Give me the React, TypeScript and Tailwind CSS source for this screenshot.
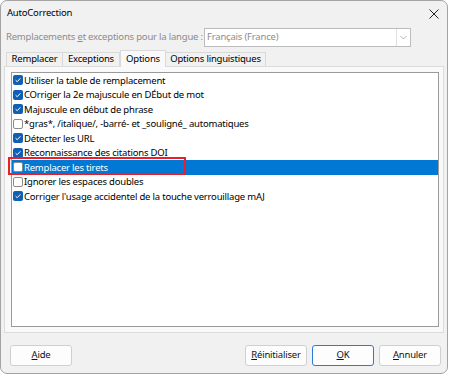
import React from 'react';

const items: { label: string; checked: boolean }[] = [
    { label: 'Utiliser la table de remplacement', checked: true },
    { label: 'COrriger la 2e majuscule en DÉbut de mot', checked: true },
    { label: 'Majuscule en début de phrase', checked: true },
    { label: '*gras*, /italique/, -barré- et _souligné_ automatiques', checked: false },
    { label: 'Détecter les URL', checked: true },
    { label: 'Reconnaissance des citations DOI', checked: true },
    { label: 'Remplacer les tirets', checked: false },
    { label: 'Ignorer les espaces doubles', checked: false },
    { label: "Corriger l'usage accidentel de la touche verrouillage mAJ", checked: true },
];

const SELECTED = 6;

const CheckBox = ({ checked }: { checked: boolean }) =>
    checked ? (
        <span className="w-[10px] h-[10px] rounded-[2px] bg-[#0f5fb5] flex items-center justify-center shrink-0">
            <svg width="8" height="8" viewBox="0 0 8 8">
                <path d="M1.6 4.2 L3.2 5.7 L6.4 2.3" fill="none" stroke="white" strokeWidth="1" />
            </svg>
        </span>
    ) : (
        <span className="w-[10px] h-[10px] rounded-[2px] bg-white border border-[#8a8a8a] shrink-0" />
    );

const Btn = ({ children, primary }: { children: React.ReactNode; primary?: boolean }) => (
    <button
        className={
            'w-[62px] h-[21px] rounded-[3px] bg-[#fdfdfd] text-[9.5px] tracking-[-0.2px] text-[#111] flex items-center justify-center ' +
            (primary ? 'border border-[#2b7bd1]' : 'border border-[#d0d0d0]')
        }
    >
        {children}
    </button>
);

export default function App() {
    return (
        <div className="w-[450px] h-[375px] bg-white" style={{ fontFamily: '"Noto Sans", sans-serif' }}>
            <div className="w-[448px] h-[374px] rounded-[7px] border border-[#a3a3a3] bg-[#f1f1f1] flex flex-col text-[9.5px] tracking-[-0.2px]">
                {/* title */}
                <div className="h-[25px] flex items-center justify-between pl-[6px] pr-[8px]">
                    <span className="text-black">AutoCorrection</span>
                    <svg width="10" height="10" viewBox="0 0 10 10">
                        <path d="M0.5 0.5 L9.5 9.5 M9.5 0.5 L0.5 9.5" stroke="#222" strokeWidth="1" />
                    </svg>
                </div>

                {/* language */}
                <div className="h-[20px] mt-[1px] flex items-center pl-[5px]">
                    <span className="w-[198px] whitespace-nowrap text-[#8c8c8c]">
                        Remplacements <span className="underline">e</span>t exceptions pour la langue :
                    </span>
                    <div className="w-[207px] h-[19px] border border-[#bcbcbc] bg-white flex items-center">
                        <span className="flex-1 pl-[2px] text-[#8c8c8c]">Français (France)</span>
                        <span className="w-[14px] h-full border-l border-[#e0e0e0] flex items-center justify-center">
                            <svg width="7" height="5" viewBox="0 0 7 5">
                                <path d="M0.5 1 L3.5 4 L6.5 1" fill="none" stroke="#a8a8a8" strokeWidth="0.9" />
                            </svg>
                        </span>
                    </div>
                </div>

                {/* tabs */}
                <div className="h-[16px] mt-[3px] flex items-end pl-[5px] text-black">
                    <div className="h-[14px] w-[57px] border border-b-0 border-[#d9d9d9] flex items-center justify-center">Remplacer</div>
                    <div className="h-[14px] w-[57px] border border-l-0 border-b-0 border-[#d9d9d9] flex items-center justify-center">Exceptions</div>
                    <div className="h-[17px] w-[46px] border border-b-0 border-[#d9d9d9] bg-[#f9f9f9] -mb-[1px] relative z-10 flex items-center justify-center">Options</div>
                    <div className="h-[14px] w-[100px] border border-l-0 border-b-0 border-[#d9d9d9] flex items-center justify-center">Options linguistiques</div>
                </div>

                {/* panel */}
                <div className="mx-[3px] h-[267px] border border-[#dcdcdc] bg-[#f9f9f9] pl-[6px] pr-[4px] pt-[5px] pb-[5px]">
                    <div className="h-full border border-[#9a9a9a] bg-white text-black">
                        {items.map((it, i) => (
                            <div
                                key={it.label}
                                className={
                                    'h-[14.5px] flex items-center gap-[1px] pl-[1px] relative ' +
                                    (i === SELECTED ? 'bg-[#0078d4] text-white' : '')
                                }
                            >
                                <CheckBox checked={it.checked} />
                                <span className="whitespace-nowrap leading-none">{it.label}</span>
                                {i === SELECTED && (
                                    <span className="absolute left-[-4px] top-[-3px] w-[178px] h-[18px] border-2 border-[#e8202c]" />
                                )}
                            </div>
                        ))}
                    </div>
                </div>

                {/* buttons */}
                <div className="mt-[12px] flex items-center pl-[9px] pr-[6px]">
                    <Btn><span><span className="underline">A</span>ide</span></Btn>
                    <div className="flex-1" />
                    <div className="flex gap-[5px]">
                        <Btn><span><span className="underline">R</span>éinitialiser</span></Btn>
                        <Btn primary><span><span className="underline">O</span>K</span></Btn>
                        <Btn><span><span className="underline">A</span>nnuler</span></Btn>
                    </div>
                </div>
            </div>
        </div>
    );
}
